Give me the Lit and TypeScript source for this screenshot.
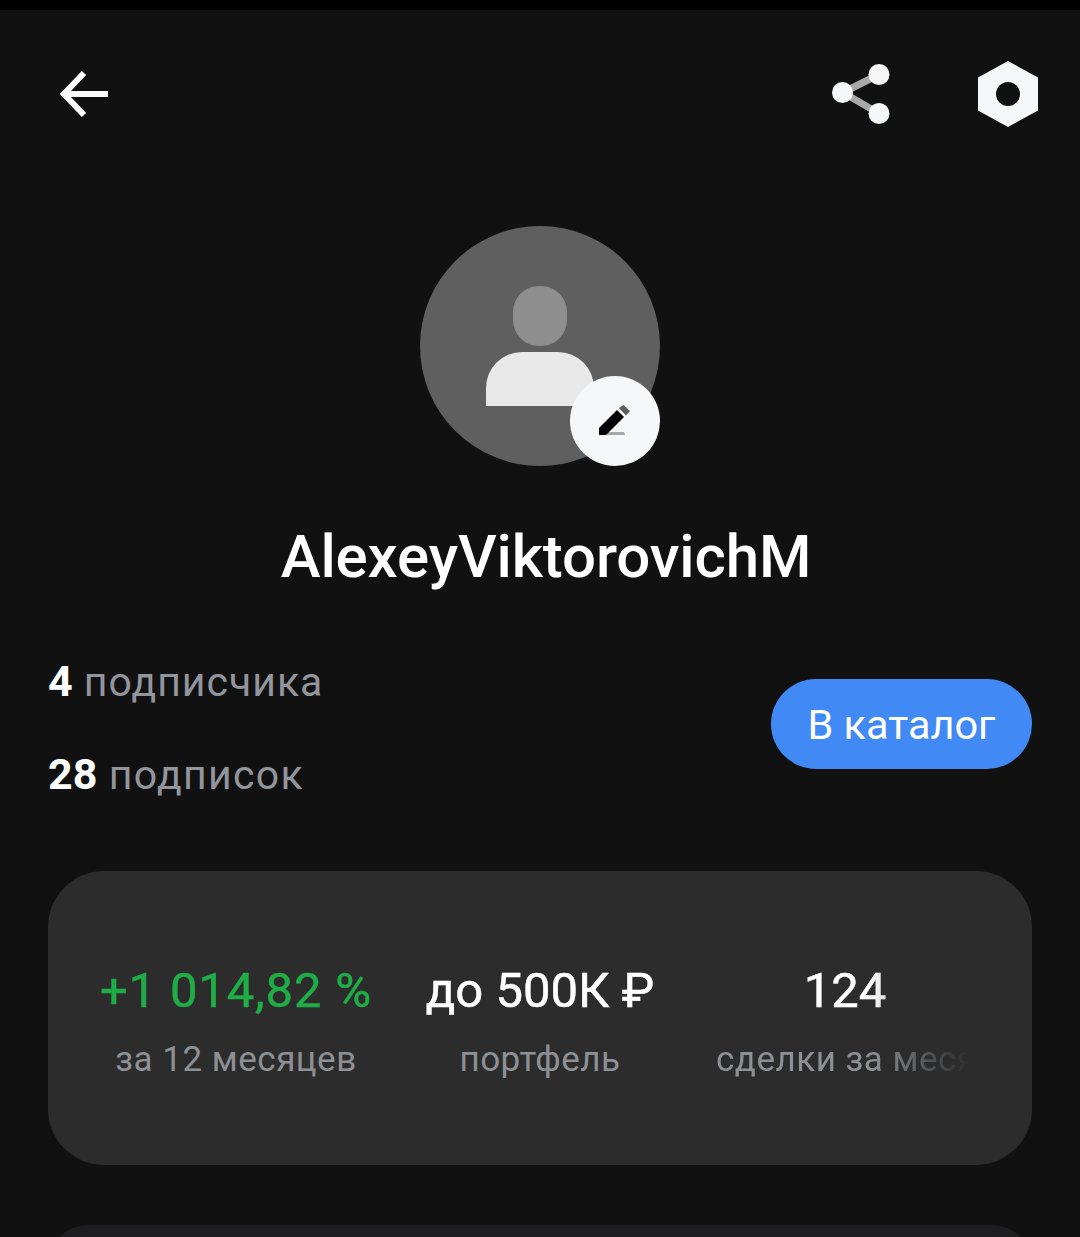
import { LitElement, html, css } from "lit";
import { customElement } from "lit/decorators.js";

@customElement("app-root")
export class AppRoot extends LitElement {
  static styles = css`
    :host { display: block; width: 1080px; height: 1237px; overflow: hidden; background: #111112; font-family: Roboto, "Liberation Sans", sans-serif; color: #fff; }
    .status { height: 10px; background: #000; }
    .top { display: flex; align-items: center; height: 168px; padding: 0 42px 0 60px; box-sizing: border-box; }
    .top svg { display: block; }
    .back { margin-right: auto; }
    .share { margin-right: 87px; }
    .avatar-wrap { display: flex; justify-content: center; padding-top: 48px; }
    .avatar { position: relative; width: 240px; height: 240px; border-radius: 50%; background: #5f5f5f; }
    .avatar svg.person { display: block; }
    .edit { position: absolute; left: 150px; top: 150px; width: 90px; height: 90px; border-radius: 50%; background: #f6f7f8; display: flex; align-items: center; justify-content: center; }
    .name { text-align: center; padding-left: 12px; margin-top: 53px; font-size: 60px; line-height: 76px; font-weight: 500; letter-spacing: -0.13px; }
    .social { display: flex; align-items: flex-start; justify-content: space-between; padding: 0 48px; margin-top: 64px; }
    .links { display: flex; flex-direction: column; gap: 47px; }
    .link { font-size: 41px; line-height: 46px; color: #92959c; letter-spacing: 1px; }
    .link b { color: #fff; font-weight: 700; font-size: 43px; line-height: 0; letter-spacing: 0; }
    .link.second { letter-spacing: 1.300px; }
    .btn { width: 261px; height: 90px; margin-top: 20px; border-radius: 45px; background: #4189f4; display: flex; align-items: center; justify-content: center; font-size: 41.500px; color: #fff; }
    .card { margin: 0 48px; height: 294px; border-radius: 56px; background: #2c2c2d; overflow: hidden; }
    .stats-card { margin-top: 73px; display: flex; padding: 90px 0 0 52px; box-sizing: border-box; }
    .stat { display: flex; flex-direction: column; align-items: center; white-space: nowrap; flex: none; }
    .s1 { width: 272px; }
    .s2 { width: 336px; }
    .s3 { width: 258px; margin-left: 8px; overflow: hidden; align-items: stretch; text-align: center; -webkit-mask-image: linear-gradient(90deg, #000 60%, transparent 98%); mask-image: linear-gradient(90deg, #000 60%, transparent 98%); }
    .val { font-size: 49px; line-height: 60px; font-weight: 400; -webkit-text-stroke: 0.5px currentColor; }
    .green { color: #1fae46; letter-spacing: 0.85px; }
    .lab { font-size: 35px; line-height: 40px; margin-top: 19px; color: #8d9095; letter-spacing: 0.5px; }
    .s3 .lab { text-align: left; overflow: hidden; }
    .next { margin: 60px 48px 0; height: 200px; border-radius: 40px; background: #1e1e20; }
  `;

  render() {
    return html`
      <div class="status"></div>
      <div class="top">
        <svg class="back" width="50" height="50" viewBox="0 0 50 50" fill="none" stroke="#fff" stroke-width="6"><path d="M48 25H5"/><path d="M24 4 4 25 24 46"/></svg>
        <svg class="share" width="60" height="62" viewBox="0 0 60 62"><path d="M12 29.500 48 11.500M12 29.500 48 50.500" stroke="#a8a8a8" stroke-width="7" fill="none"/><circle cx="11.500" cy="29.500" r="10.500" fill="#f6f7f8"/><circle cx="48" cy="11.500" r="10.500" fill="#f6f7f8"/><circle cx="48" cy="50.500" r="10.500" fill="#f6f7f8"/></svg>
        <svg width="60" height="66" viewBox="0 0 60 66"><path fill-rule="evenodd" fill="#f6f7f8" d="M30 0 60 16.500V49.500L30 66 0 49.500V16.500ZM30 21a12 12 0 1 0 0 24 12 12 0 0 0 0-24Z"/></svg>
      </div>
      <div class="avatar-wrap">
        <div class="avatar">
          <svg class="person" width="240" height="240" viewBox="0 0 240 240">
            <rect x="93" y="60" width="54" height="60" rx="26" fill="#8e8e8e"/>
            <path d="M66 180V162a36 36 0 0 1 36-36h36a36 36 0 0 1 36 36v18Z" fill="#e8e8e8"/>
          </svg>
          <div class="edit">
            <svg width="32" height="32" viewBox="0 0 32 32"><path d="M10 27H25L26 30H7Z" fill="#a8a8a8"/><path d="M0 30V23L18 5 25 12 7 30Z" fill="#000"/><path d="M20 3 24.500 0 31 6 27 10.500Z" fill="#5c5c5c"/></svg>
          </div>
        </div>
      </div>
      <div class="name">AlexeyViktorovichM</div>
      <div class="social">
        <div class="links">
          <div class="link"><b>4</b> подписчика</div>
          <div class="link second"><b>28</b> подписок</div>
        </div>
        <div class="btn">В каталог</div>
      </div>
      <div class="card stats-card">
        <div class="stat s1"><div class="val green">+1 014,82 %</div><div class="lab">за 12 месяцев</div></div>
        <div class="stat s2"><div class="val">до 500К ₽</div><div class="lab">портфель</div></div>
        <div class="stat s3"><div class="val">124</div><div class="lab">сделки за месяц</div></div>
      </div>
      <div class="next"></div>
    `;
  }
}
